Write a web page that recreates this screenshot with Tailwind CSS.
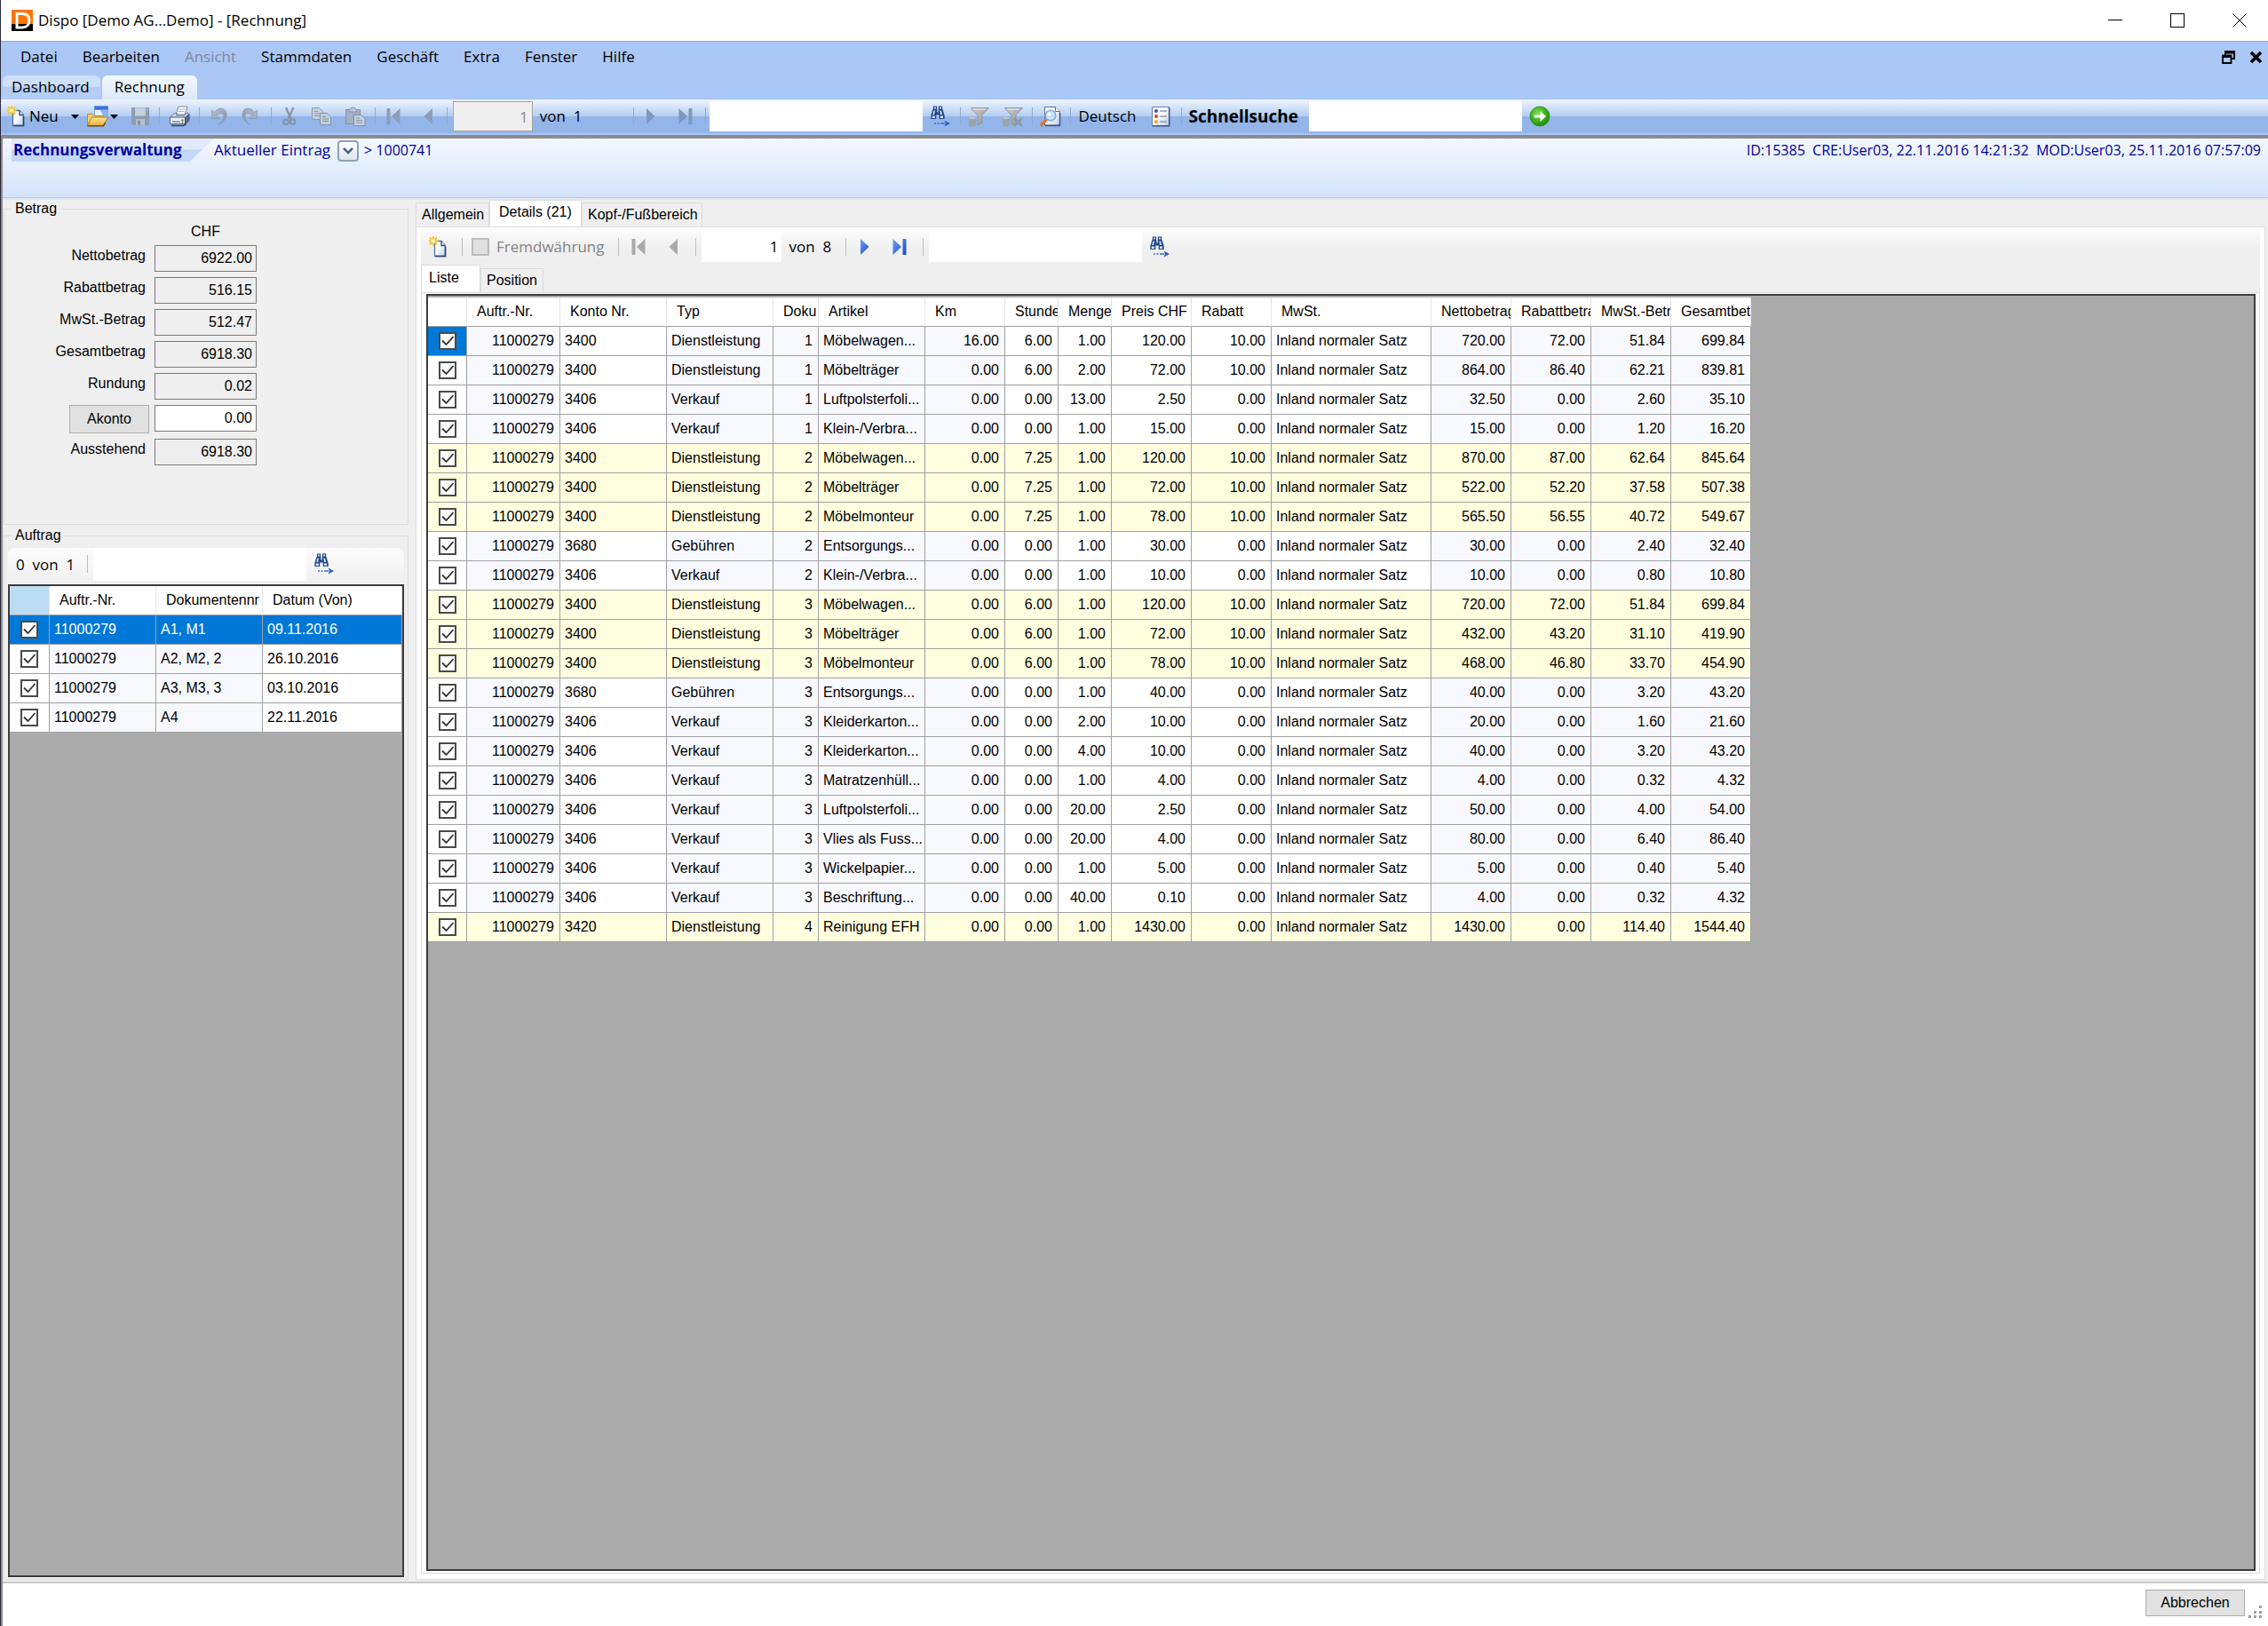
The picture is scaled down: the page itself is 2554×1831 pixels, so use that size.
<!DOCTYPE html>
<html lang="de">
<head>
    <meta charset="UTF-8">
    <meta name="viewport" content="width=device-width, initial-scale=1.0">
    <title>Dispo - Rechnung</title>
    <script src="https://cdn.jsdelivr.net/npm/@tailwindcss/browser@4"></script>
</head>
<body class="flex h-screen flex-col overflow-hidden border-l border-[#2b2b3b] bg-[#efefef] font-['Open_Sans',sans-serif] text-[17px] text-black">

    <!-- Icon set -->
    <svg class="absolute h-0 w-0" aria-hidden="true">
        <defs>
            <linearGradient id="gGray" x1="0" y1="0" x2="1" y2="1"><stop offset="0" stop-color="#b3bfcf"/><stop offset="1" stop-color="#8391a3"/></linearGradient>
            <linearGradient id="gSilver" x1="0" y1="0" x2="1" y2="1"><stop offset="0" stop-color="#cfcfcf"/><stop offset="1" stop-color="#8f8f8f"/></linearGradient>
            <linearGradient id="gBlue" x1="0" y1="0" x2="1" y2="1"><stop offset="0" stop-color="#6fa0f5"/><stop offset="1" stop-color="#1448c8"/></linearGradient>
            <linearGradient id="gPage" x1="0" y1="0" x2="1" y2="1"><stop offset=".4" stop-color="#ffffff"/><stop offset="1" stop-color="#b9cdec"/></linearGradient>
            <linearGradient id="gFolder" x1="0" y1="0" x2="0" y2="1"><stop offset="0" stop-color="#ffe9a0"/><stop offset="1" stop-color="#eba92c"/></linearGradient>
            <radialGradient id="gGreen" cx=".4" cy=".35" r=".7"><stop offset="0" stop-color="#7fe04a"/><stop offset="1" stop-color="#118a06"/></radialGradient>
        </defs>
        <symbol id="new" viewBox="0 0 22 24">
            <path d="M7.500 5.500h7.500l4.500 5v12h-12z" fill="url(#gPage)" stroke="#56729c" stroke-width="1.300"/>
            <path d="M15 5.500v5h4.500" fill="#dfe8f6" stroke="#2e4a78" stroke-width="1.300"/>
            <path d="M19.500 12v10.500h-11" fill="none" stroke="#2f4468" stroke-width="1.600"/>
            <path d="M6 0v11M.5 5.500h11M2 1.500l8 8M10 1.500l-8 8" stroke="#f3c533" stroke-width="2"/>
            <circle cx="6" cy="5.500" r="2.200" fill="#fff3a8"/>
        </symbol>
        <symbol id="open" viewBox="0 0 26 24">
            <rect x="9.500" y=".7" width="15" height="14" fill="#e4efff" stroke="#7fa3e6"/>
            <rect x="9.500" y=".7" width="15" height="4" fill="#3f6fd8"/>
            <path d="M16 5h8.500v9h-4z" fill="#8db4f3"/>
            <path d="M1.500 22V9.500h6l2 2h10v4" fill="#f5d06c" stroke="#c08a1c"/>
            <path d="M1.500 22.500l5-9.500h18l-5 9.500z" fill="url(#gFolder)" stroke="#b07a16"/>
            <path d="M1.500 22.800h18l2-3.500" fill="none" stroke="#5a4212" stroke-width="1.300"/>
        </symbol>
        <symbol id="save" viewBox="0 0 22 22">
            <path d="M1 1h20v20H3l-2-2z" fill="#8d9bb0"/>
            <path d="M5 1.500h12v9H5z" fill="#c5d0df"/>
            <path d="M6 14h10v7H6z" fill="#b4c1d2"/><path d="M8 15.500h3V21H8z" fill="#8391a6"/>
            <path d="M18 2.500h1.500v2H18z" fill="#c5d0df"/>
        </symbol>
        <symbol id="print" viewBox="0 0 24 24">
            <path d="M8 10l3-9h10l-3 9z" fill="#fdfdff" stroke="#7f8da5"/>
            <path d="M11.500 4h7M10.500 6.500h7" stroke="#aab6c8"/>
            <path d="M1.500 13l5-4.500h3l-1 2.500h9.500l1.500-2.500h2.500l1 1-4 4.500z" fill="#cfd9e8" stroke="#6d7b94"/>
            <path d="M1.500 13h17v7.500h-17z" fill="#e9eef6" stroke="#55637d"/>
            <path d="M18.500 13.500l4.500-4v7l-4.500 4z" fill="#5b6b88" stroke="#3c4a66"/>
            <path d="M3 22.500h14l3-2" fill="none" stroke="#33415c" stroke-width="1.500"/>
            <path d="M4 18h9" stroke="#76849c" stroke-width="1.500"/><circle cx="15.500" cy="16.500" r="1.200" fill="#27a544"/><circle cx="15.500" cy="19" r=".9" fill="#e04b2c"/>
        </symbol>
        <symbol id="undo" viewBox="0 0 20 22">
            <path d="M1.500 4v9.500h9l-3.300-3.300c3-4 9-2.700 7.500 2.800-.7 2.500-2.700 5-5.700 7.500 6-2.500 10-8 9-13-1-6.500-9-7.500-13.300-1.200z" fill="url(#gGray)" stroke="#8593a8" stroke-width=".6"/>
        </symbol>
        <symbol id="cut" viewBox="0 0 16 22">
            <path d="M4 1l5.500 13M12.500 1L6.500 14" stroke="#8a97aa" stroke-width="2.400" fill="none"/>
            <circle cx="4" cy="17.500" r="2.800" fill="none" stroke="#8492a8" stroke-width="2"/><circle cx="11.500" cy="17" r="2.800" fill="none" stroke="#8492a8" stroke-width="2"/>
        </symbol>
        <symbol id="copy" viewBox="0 0 24 22">
            <path d="M1.500 1.500h8l4 4v9h-12z" fill="#c4cfde" stroke="#8d9bb0"/><path d="M4 5.500h4M4 8h7M4 10.500h7" stroke="#8d9bb0"/>
            <path d="M10.500 7.500h8l4 4v9h-12z" fill="#c4cfde" stroke="#8391a6"/><path d="M13 11.500h4M13 14h7M13 16.500h7" stroke="#8391a6"/>
        </symbol>
        <symbol id="paste" viewBox="0 0 24 22">
            <path d="M1.500 3.500h16v16h-16z" fill="#a4b1c4" stroke="#8492a8"/><path d="M5.500 4.500c0-2 2-3.500 4-3.500s4 1.500 4 3.500v1.500h-8z" fill="#bdc8d8" stroke="#8492a8"/>
            <path d="M10.500 9.500h8l4.500 4v8H10.500z" fill="#c8d2e0" stroke="#7f8da3"/><path d="M13 13h4M13 15.500h7M13 18h7" stroke="#8593a8"/>
        </symbol>
        <symbol id="first" viewBox="0 0 16 20"><path d="M.5 1h4v18h-4zM15.500 1v18L6 10z"/></symbol>
        <symbol id="prev" viewBox="0 0 10 20"><path d="M10 1v18L.5 10z"/></symbol>
        <symbol id="next" viewBox="0 0 10 20"><path d="M0 1v18l9.500-9z"/></symbol>
        <symbol id="last" viewBox="0 0 16 20"><path d="M.5 1v18l9.500-9zM11.500 1h4v18h-4z"/></symbol>
        <symbol id="find" viewBox="0 0 24 24">
            <path d="M4.500 1h3v3h-3zM10.500 1h3v3h-3z" fill="#e6eefb" stroke="#1d3f80" stroke-width="1.200"/>
            <path d="M3.500 4h4.800v3.500h1.400V4h4.800l2.200 7v4h-6v-4.500H7.300V15h-6v-4z" fill="#24488c"/>
            <path d="M4.500 5.500h1.500L5 10H3.300zM11.500 5.500H13l1 4.500h-2zM2.800 11.500h3V14h-3zM12 11.500h3V14h-3z" fill="#dfe9fa"/>
            <path d="M5 20h2M8.500 20h2M12 20h5" stroke="#3d6bd0" stroke-width="1.600"/><path d="M16.500 16.500l6.500 3.500-6.500 3.500 1.500-3.500z" fill="#2d5cc8"/>
        </symbol>
        <symbol id="filter" viewBox="0 0 24 24">
            <path d="M3.500 2.500h20l-7.500 8v9l-5 2.500V11z" fill="url(#gSilver)" stroke="#8e98a6"/><path d="M6 4h14" stroke="#dde2e8" stroke-width="1.500"/>
            <path d="M1 13.500c0-2 8-2 8 0V22c0 2-8 2-8 0z" fill="#9ba3ae"/><ellipse cx="5" cy="13.700" rx="3.600" ry="1.200" fill="#c5cad2"/>
        </symbol>
        <symbol id="preview" viewBox="0 0 24 24">
            <path d="M5.500 1.500h12l5 5v15.500h-17z" fill="url(#gPage)" stroke="#5c7098"/><path d="M17.500 1.500v5h5" fill="#fff" stroke="#5c7098"/>
            <path d="M6 22.500h16.500V8" fill="none" stroke="#45567a" stroke-width="1.500"/>
            <path d="M7.500 15.500L2 21.500" stroke="#d97b2c" stroke-width="3.600" stroke-linecap="round"/>
            <circle cx="12" cy="11" r="5.800" fill="#bfe6fb" stroke="#8fa9cf" stroke-width="1.600"/><circle cx="10.500" cy="9.500" r="2" fill="#f4fcff"/>
        </symbol>
        <symbol id="list" viewBox="0 0 22 24">
            <path d="M1.500 1.500h19v21h-19z" fill="url(#gPage)" stroke="#6d7fa8"/><path d="M1.500 22.700h19.200V2" fill="none" stroke="#44557c" stroke-width="1.600"/>
            <path d="M10 6h8M10 12h8M10 18h8" stroke="#8f9bb3" stroke-width="1.500"/>
            <circle cx="6" cy="6" r="2" fill="#3a4fe0"/><circle cx="6" cy="12" r="2" fill="#e2402c"/><circle cx="6" cy="18" r="2" fill="#e6a91c"/>
        </symbol>
        <symbol id="go" viewBox="0 0 24 24">
            <circle cx="12" cy="12" r="11" fill="url(#gGreen)" stroke="#2a9a1c"/>
            <path d="M5.500 10.500h7V6l6.500 6-6.500 6v-4.500h-7z" fill="#fff"/>
        </symbol>
        <symbol id="tick" viewBox="0 0 20 20"><path d="M4 9.500l4.500 4.500L16.500 5" fill="none" stroke="#333" stroke-width="1.800"/></symbol>
    </svg>

    <!-- Title bar -->
    <header class="flex h-[46px] shrink-0 items-center bg-white pl-3 pr-6">
        <svg class="h-6 w-6" viewBox="0 0 24 24">
            <path d="M0 0h24v16H0z" fill="#ff7300"/><path d="M0 16h24v8H0z" fill="#000"/>
            <path d="M6 4.500h6c5 0 8 2.700 8 7.500s-3 8-8 8H6z" fill="none" stroke="#fff" stroke-width="3"/>
        </svg>
        <h1 class="ml-[6px] flex-1">Dispo [Demo AG...Demo] - [Rechnung]</h1>
        <div class="flex items-center gap-[54px]">
            <button type="button" aria-label="Minimieren"><svg class="h-4 w-4" viewBox="0 0 16 16" shape-rendering="crispEdges"><path d="M0 7.500h16" stroke="#000"/></svg></button>
            <button type="button" aria-label="Maximieren"><svg class="h-4 w-4" viewBox="0 0 16 16" shape-rendering="crispEdges"><path d="M.5.5h15v15H.5z" fill="none" stroke="#000"/></svg></button>
            <button type="button" aria-label="Schliessen"><svg class="h-4 w-4" viewBox="0 0 16 16"><path d="M.5.5l15 15M15.500.5l-15 15" stroke="#000"/></svg></button>
        </div>
    </header>

    <!-- Menu -->
    <nav class="flex h-[39px] shrink-0 items-center border-t border-[#8fa6d3] bg-[#abc7f6] pb-1 pl-2 pr-[6px]">
        <a href="#" class="px-[14px]">Datei</a>
        <a href="#" class="px-[14px]">Bearbeiten</a>
        <a href="#" class="px-[14px] text-[#7f8796]">Ansicht</a>
        <a href="#" class="px-[14px]">Stammdaten</a>
        <a href="#" class="px-[14px]">Geschäft</a>
        <a href="#" class="px-[14px]">Extra</a>
        <a href="#" class="px-[14px]">Fenster</a>
        <a href="#" class="px-[14px]">Hilfe</a>
        <button type="button" aria-label="Wiederherstellen" class="ml-auto"><svg class="h-[15px] w-[15px]" viewBox="0 0 15 15"><path d="M4 5V1h10v8h-3M4 2.500h10" fill="none" stroke="#000" stroke-width="1.800"/><path d="M1 5.500h9.500V14H1zM1 7h9.500" fill="none" stroke="#000" stroke-width="1.800"/></svg></button>
        <button type="button" aria-label="Fenster schliessen" class="ml-4"><svg class="h-[15px] w-[15px]" viewBox="0 0 15 15"><path d="M2 2l11 11M13 2L2 13" stroke="#000" stroke-width="3.600"/></svg></button>
    </nav>

    <!-- Document tabs -->
    <nav class="flex h-[27px] shrink-0 gap-[2px] bg-[#abc7f6] pl-[2px]">
        <a href="#" class="flex items-center rounded-t-md bg-linear-to-b from-[#cddff9] from-45% to-[#b4cdf6] to-50% pb-[2px] pl-[10px] pr-3">Dashboard</a>
        <a href="#" class="flex items-center rounded-t-md bg-linear-to-b from-[#f3f8ff] to-[#dbe8fb] px-[14px] pb-[2px]">Rechnung</a>
    </nav>

    <!-- Main toolbar -->
    <div class="flex h-10 shrink-0 items-center border-b-2 border-[#a9c6f2] bg-linear-to-b from-[#e9f1fc] from-5% via-[#b3cdf0] via-50% to-[#93b5ea] to-50% pl-[6px]">
        <button type="button" class="flex items-center"><svg class="mr-1 h-6 w-[22px]"><use href="#new"/></svg>Neu</button>
        <svg class="ml-[14px] h-[5px] w-[9px]" viewBox="0 0 9 5"><path d="M0 0h9L4.500 5z"/></svg>
        <button type="button" aria-label="Öffnen" class="ml-2 flex items-center"><svg class="h-6 w-[26px]"><use href="#open"/></svg><svg class="ml-[1px] h-[5px] w-[9px]" viewBox="0 0 9 5"><path d="M0 0h9L4.500 5z"/></svg></button>
        <button type="button" aria-label="Speichern" class="ml-[14px]"><svg class="block h-[22px] w-[22px]"><use href="#save"/></svg></button>
        <span class="ml-[10px] h-5 w-px bg-[#8faad2]"></span>
        <button type="button" aria-label="Drucken" class="ml-[10px]"><svg class="block h-6 w-6"><use href="#print"/></svg></button>
        <span class="ml-[10px] h-5 w-px bg-[#8faad2]"></span>
        <button type="button" aria-label="Rückgängig" class="ml-3"><svg class="block h-[22px] w-5"><use href="#undo"/></svg></button>
        <button type="button" aria-label="Wiederholen" class="ml-[14px]"><svg class="block h-[22px] w-5 -scale-x-100"><use href="#undo"/></svg></button>
        <span class="ml-[14px] h-5 w-px bg-[#8faad2]"></span>
        <button type="button" aria-label="Ausschneiden" class="ml-3"><svg class="block h-[22px] w-4"><use href="#cut"/></svg></button>
        <button type="button" aria-label="Kopieren" class="ml-4"><svg class="block h-[22px] w-6"><use href="#copy"/></svg></button>
        <button type="button" aria-label="Einfügen" class="ml-[14px]"><svg class="block h-[22px] w-6"><use href="#paste"/></svg></button>
        <span class="ml-[10px] h-5 w-px bg-[#8faad2]"></span>
        <button type="button" aria-label="Erster" class="ml-3"><svg class="block h-5 w-4 fill-[#8c9db8]"><use href="#first"/></svg></button>
        <button type="button" aria-label="Vorheriger" class="ml-[26px]"><svg class="block h-5 w-[10px] fill-[#8c9db8]"><use href="#prev"/></svg></button>
        <span class="ml-4 h-5 w-px bg-[#8faad2]"></span>
        <input type="text" value="1" disabled aria-label="Datensatz" class="ml-[6px] h-[34px] w-[90px] border border-[#a6a6a6] bg-[#efefef] px-1 text-right text-[#8b8b8b]">
        <span class="ml-2 whitespace-pre">von  1</span>
        <span class="ml-[58px] h-5 w-px bg-[#8faad2]"></span>
        <button type="button" aria-label="Nächster" class="ml-[14px]"><svg class="block h-5 w-[10px] fill-[#7f97bd]"><use href="#next"/></svg></button>
        <button type="button" aria-label="Letzter" class="ml-[26px]"><svg class="block h-5 w-4 fill-[#7f97bd]"><use href="#last"/></svg></button>
        <span class="ml-[14px] h-5 w-px bg-[#8faad2]"></span>
        <input type="text" aria-label="Suchen" class="ml-1 h-[34px] w-[240px] bg-white px-1">
        <button type="button" aria-label="Suche starten" class="ml-2"><svg class="block h-6 w-6"><use href="#find"/></svg></button>
        <span class="ml-[10px] h-5 w-px bg-[#8faad2]"></span>
        <button type="button" aria-label="Filter" class="ml-2"><svg class="block h-6 w-6"><use href="#filter"/></svg></button>
        <button type="button" aria-label="Filter entfernen" class="ml-[14px] grid"><svg class="col-start-1 row-start-1 h-6 w-6"><use href="#filter"/></svg><svg class="col-start-1 row-start-1 h-6 w-6" viewBox="0 0 24 24"><path d="M14 14l9 9M23 14l-9 9" stroke="#8d97a6" stroke-width="2.500"/></svg></button>
        <span class="ml-[10px] h-5 w-px bg-[#8faad2]"></span>
        <button type="button" aria-label="Vorschau" class="ml-2"><svg class="block h-6 w-6"><use href="#preview"/></svg></button>
        <span class="ml-[10px] h-5 w-px bg-[#8faad2]"></span>
        <button type="button" class="ml-2">Deutsch</button>
        <button type="button" aria-label="Optionen" class="ml-4"><svg class="block h-6 w-[22px]"><use href="#list"/></svg></button>
        <span class="ml-3 h-5 w-px bg-[#8faad2]"></span>
        <label for="quick" class="ml-2 text-[19px] font-bold">Schnellsuche</label>
        <input type="text" id="quick" class="ml-3 h-[34px] w-[240px] bg-white px-1">
        <button type="button" aria-label="Los" class="ml-2"><svg class="block h-6 w-6"><use href="#go"/></svg></button>
    </div>

    <div class="flex min-h-0 flex-1 flex-col border-l-2 border-t-4 border-[#8a8a8a]">
        <!-- Breadcrumb -->
        <div class="flex h-[67px] shrink-0 items-start border-b border-[#c4c8d0] bg-linear-to-b from-[#f4f8ff] to-[#d5e3fa] pl-[10px] pr-2 leading-[26px] text-[#00009c]">
            <h2 class="w-[228px] bg-linear-to-b from-[#dfeafc] from-45% to-[#c3d8f9] to-50% pl-[2px] font-bold [clip-path:polygon(0_0,100%_0,88%_100%,0_100%)]">Rechnungsverwaltung</h2>
            <a href="#">Aktueller Eintrag</a>
            <button type="button" aria-label="Eintrag wählen" class="ml-2 mt-[2px] flex h-6 w-6 items-center justify-center rounded-sm border-2 border-[#8ba2bd] bg-linear-to-b from-white to-[#dce6f2]"><svg class="h-2 w-3" viewBox="0 0 12 8"><path d="M1 1l5 5 5-5" fill="none" stroke="#4a6390" stroke-width="2.500"/></svg></button>
            <span class="ml-[6px] text-[16px]">&gt; 1000741</span>
            <span class="ml-auto whitespace-pre text-[16px]">ID:15385  CRE:User03, 22.11.2016 14:21:32  MOD:User03, 25.11.2016 07:57:09</span>
        </div>

        <main class="flex min-h-0 flex-1 border-t-2 border-[#dfe7f5] font-['Liberation_Sans',sans-serif] text-[16px]">
            <aside class="flex w-[457px] shrink-0 flex-col gap-[3px] pb-[2px] pl-px pt-px">
                <fieldset class="h-[365px] shrink-0 border border-[#dcdcdc]">
                    <legend class="ml-2 px-1 leading-[18px]">Betrag</legend>
                    <div class="grid grid-cols-[159px_115px] gap-x-[10px] gap-y-[6px] pt-2">
                        <span class="col-start-2 text-center leading-[18px]">CHF</span>
                        <label for="netto" class="text-right leading-6">Nettobetrag</label>
                        <input id="netto" readonly value="6922.00" class="h-[30px] border border-[#7a7a7a] px-1 text-right">
                        <label for="rabatt" class="text-right leading-6">Rabattbetrag</label>
                        <input id="rabatt" readonly value="516.15" class="h-[30px] border border-[#7a7a7a] px-1 text-right">
                        <label for="mwst" class="text-right leading-6">MwSt.-Betrag</label>
                        <input id="mwst" readonly value="512.47" class="h-[30px] border border-[#7a7a7a] px-1 text-right">
                        <label for="gesamt" class="text-right leading-6">Gesamtbetrag</label>
                        <input id="gesamt" readonly value="6918.30" class="h-[30px] border border-[#7a7a7a] px-1 text-right">
                        <label for="rundung" class="text-right leading-6">Rundung</label>
                        <input id="rundung" readonly value="0.02" class="h-[30px] border border-[#7a7a7a] px-1 text-right">
                        <button type="button" class="-mr-1 h-8 w-[90px] justify-self-end border border-[#adadad] bg-[#e1e1e1]">Akonto</button>
                        <input aria-label="Akonto" value="0.00" class="h-[30px] border border-[#7a7a7a] bg-white px-1 text-right">
                        <label for="offen" class="text-right leading-6">Ausstehend</label>
                        <input id="offen" readonly value="6918.30" class="h-[30px] border border-[#7a7a7a] px-1 text-right">
                    </div>
                </fieldset>
                <fieldset class="min-h-0 flex-1 border border-[#dcdcdc]">
                    <legend class="ml-2 px-1 leading-[18px]">Auftrag</legend>
                    <div class="flex h-full flex-col px-1 pb-[2px] pt-[5px]">
                        <div class="flex h-[41px] shrink-0 items-start rounded-lg bg-linear-to-b from-[#fcfcfc] to-[#efefef] pl-[9px] font-['Open_Sans',sans-serif] text-[17px]">
                            <span class="whitespace-pre leading-[37px]">0  von  1</span>
                            <span class="ml-[14px] mt-2 h-5 w-px bg-[#bdbdbd]"></span>
                            <input type="text" aria-label="Auftrag suchen" class="ml-[6px] h-[37px] w-[240px] bg-white px-1">
                            <button type="button" aria-label="Suche starten" class="ml-2 mt-[6px]"><svg class="block h-6 w-6"><use href="#find"/></svg></button>
                        </div>
                        <div class="min-h-0 flex-1 border-2 border-[#3c3c3c] bg-[#ababab]">
                            <table class="w-full table-fixed border-separate border-spacing-0 text-left">
                                <colgroup><col class="w-[45px]"><col class="w-[120px]"><col class="w-[120px]"><col></colgroup>
                                <thead>
                                    <tr class="h-[33px] bg-white">
                                        <th aria-label="Auswahl" class="border-b border-r border-b-[#a0a0a0] border-r-[#e5e5e5] bg-[#bcdcf4]"></th>
                                        <th class="border-b border-r border-b-[#a0a0a0] border-r-[#e5e5e5] pl-[11px] font-normal whitespace-nowrap">Auftr.-Nr.</th>
                                        <th class="border-b border-r border-b-[#a0a0a0] border-r-[#e5e5e5] pl-[11px] font-normal whitespace-nowrap">Dokumentennr</th>
                                        <th class="border-b border-r border-b-[#a0a0a0] border-r-[#e5e5e5] pl-[11px] font-normal whitespace-nowrap">Datum (Von)</th>
                                    </tr>
                                </thead>
                                <tbody id="orders"></tbody>
                            </table>
                        </div>
                    </div>
                </fieldset>
            </aside>

            <section class="flex min-w-0 flex-1 flex-col pb-[2px] pl-2 pr-[3px]">
                <div class="flex items-end">
                    <a href="#" class="flex h-[27px] w-[83px] items-center border border-b-0 border-[#dcdcdc] px-[6px]">Allgemein</a>
                    <a href="#" class="-mb-px flex h-[31px] w-[104px] items-center border border-b-0 border-[#dcdcdc] bg-white px-[10px] pb-1">Details (21)</a>
                    <a href="#" class="flex h-[27px] w-[136px] items-center border border-b-0 border-[#dcdcdc] px-[6px]">Kopf-/Fußbereich</a>
                </div>
                <div class="flex min-h-0 flex-1 flex-col border border-[#dcdcdc] bg-white pb-[6px] pl-[5px] pr-[5px] pt-px">
                    <div class="flex h-[41px] shrink-0 items-center bg-linear-to-b from-[#fcfcfc] to-[#efefef] to-60% pl-2 font-['Open_Sans',sans-serif] text-[17px]">
                        <button type="button" aria-label="Neue Position"><svg class="block h-6 w-[22px]"><use href="#new"/></svg></button>
                        <span class="ml-4 h-5 w-px bg-[#bdbdbd]"></span>
                        <input type="checkbox" id="fw" disabled class="ml-[10px] h-5 w-5 appearance-none border-2 border-[#bcbcbc] bg-[#e0e0e0]">
                        <label for="fw" class="ml-2 text-[#838383]">Fremdwährung</label>
                        <span class="ml-4 h-5 w-px bg-[#bdbdbd]"></span>
                        <button type="button" aria-label="Erste" class="ml-[14px]"><svg class="block h-5 w-4 fill-[#a9a9a9]"><use href="#first"/></svg></button>
                        <button type="button" aria-label="Vorherige" class="ml-[26px]"><svg class="block h-5 w-[10px] fill-[#a9a9a9]"><use href="#prev"/></svg></button>
                        <span class="ml-5 h-5 w-px bg-[#bdbdbd]"></span>
                        <input type="text" value="1" aria-label="Seite" class="ml-[6px] h-[34px] w-[90px] bg-white px-1 text-right">
                        <span class="ml-2 whitespace-pre">von  8</span>
                        <span class="ml-4 h-5 w-px bg-[#bdbdbd]"></span>
                        <button type="button" aria-label="Nächste" class="ml-4"><svg class="block h-5 w-[10px] fill-[url(#gBlue)]"><use href="#next"/></svg></button>
                        <button type="button" aria-label="Letzte" class="ml-[26px]"><svg class="block h-5 w-4 fill-[url(#gBlue)]"><use href="#last"/></svg></button>
                        <span class="ml-[18px] h-5 w-px bg-[#bdbdbd]"></span>
                        <input type="text" aria-label="Position suchen" class="ml-[6px] h-[34px] w-[240px] bg-white px-1">
                        <button type="button" aria-label="Suche starten" class="ml-2"><svg class="block h-6 w-6"><use href="#find"/></svg></button>
                    </div>
                    <div class="flex h-[31px] shrink-0 items-end bg-[#efefef]">
                        <a href="#" class="-mb-px flex h-8 w-[67px] items-center border border-b-0 border-[#dcdcdc] bg-white px-2 pb-1">Liste</a>
                        <a href="#" class="flex h-[27px] items-center border border-b-0 border-[#dcdcdc] px-[6px]">Position</a>
                    </div>
                    <div class="flex min-h-0 flex-1 flex-col border border-[#dcdcdc] pb-[2px] pl-[5px] pr-1 pt-px">
                        <div class="min-h-0 flex-1 border-2 border-[#3c3c3c] bg-[#ababab] pt-[2px]">
                            <table class="w-[1490px] table-fixed border-separate border-spacing-0 text-left">
                                <colgroup>
                                    <col class="w-[44px]"><col class="w-[105px]"><col class="w-[120px]"><col class="w-[120px]"><col class="w-[51px]"><col class="w-[120px]"><col class="w-[90px]"><col class="w-[60px]"><col class="w-[60px]"><col class="w-[90px]"><col class="w-[90px]"><col class="w-[180px]"><col class="w-[90px]"><col class="w-[90px]"><col class="w-[90px]"><col class="w-[90px]">
                                </colgroup>
                                <thead><tr id="heads" class="h-[33px] bg-white"></tr></thead>
                                <tbody id="items"></tbody>
                            </table>
                        </div>
                    </div>
                </div>
            </section>
        </main>

        <!-- Footer -->
        <footer class="flex h-[50px] shrink-0 items-start border-t-2 border-[#c8c8c8] bg-white pr-[6px] pt-[7px] font-['Liberation_Sans',sans-serif] text-[16px]">
            <button type="button" class="ml-auto h-[30px] w-[112px] border border-[#adadad] bg-[#e1e1e1]">Abbrechen</button>
            <svg class="ml-1 mt-4 h-4 w-4" viewBox="0 0 16 16" fill="#a0a0a0"><path d="M12 2h3v3h-3zM6 8h3v3H6zM12 8h3v3h-3zM0 13h3v3H0zM6 13h3v3H6zM12 13h3v3h-3z"/></svg>
        </footer>
    </div>

    <script>
        const heads = ['', 'Auftr.-Nr.', 'Konto Nr.', 'Typ', 'Doku', 'Artikel', 'Km', 'Stunde', 'Menge', 'Preis CHF', 'Rabatt', 'MwSt.', 'Nettobetrag', 'Rabattbetrag', 'MwSt.-Betr', 'Gesamtbet'];

        // konto|typ|doku|artikel|km|stunden|menge|preis|rabatt|netto|rabattbetrag|mwst|gesamt
        const rows = `3400|Dienstleistung|1|Möbelwagen...|16.00|6.00|1.00|120.00|10.00|720.00|72.00|51.84|699.84
3400|Dienstleistung|1|Möbelträger|0.00|6.00|2.00|72.00|10.00|864.00|86.40|62.21|839.81
3406|Verkauf|1|Luftpolsterfoli...|0.00|0.00|13.00|2.50|0.00|32.50|0.00|2.60|35.10
3406|Verkauf|1|Klein-/Verbra...|0.00|0.00|1.00|15.00|0.00|15.00|0.00|1.20|16.20
3400|Dienstleistung|2|Möbelwagen...|0.00|7.25|1.00|120.00|10.00|870.00|87.00|62.64|845.64
3400|Dienstleistung|2|Möbelträger|0.00|7.25|1.00|72.00|10.00|522.00|52.20|37.58|507.38
3400|Dienstleistung|2|Möbelmonteur|0.00|7.25|1.00|78.00|10.00|565.50|56.55|40.72|549.67
3680|Gebühren|2|Entsorgungs...|0.00|0.00|1.00|30.00|0.00|30.00|0.00|2.40|32.40
3406|Verkauf|2|Klein-/Verbra...|0.00|0.00|1.00|10.00|0.00|10.00|0.00|0.80|10.80
3400|Dienstleistung|3|Möbelwagen...|0.00|6.00|1.00|120.00|10.00|720.00|72.00|51.84|699.84
3400|Dienstleistung|3|Möbelträger|0.00|6.00|1.00|72.00|10.00|432.00|43.20|31.10|419.90
3400|Dienstleistung|3|Möbelmonteur|0.00|6.00|1.00|78.00|10.00|468.00|46.80|33.70|454.90
3680|Gebühren|3|Entsorgungs...|0.00|0.00|1.00|40.00|0.00|40.00|0.00|3.20|43.20
3406|Verkauf|3|Kleiderkarton...|0.00|0.00|2.00|10.00|0.00|20.00|0.00|1.60|21.60
3406|Verkauf|3|Kleiderkarton...|0.00|0.00|4.00|10.00|0.00|40.00|0.00|3.20|43.20
3406|Verkauf|3|Matratzenhüll...|0.00|0.00|1.00|4.00|0.00|4.00|0.00|0.32|4.32
3406|Verkauf|3|Luftpolsterfoli...|0.00|0.00|20.00|2.50|0.00|50.00|0.00|4.00|54.00
3406|Verkauf|3|Vlies als Fuss...|0.00|0.00|20.00|4.00|0.00|80.00|0.00|6.40|86.40
3406|Verkauf|3|Wickelpapier...|0.00|0.00|1.00|5.00|0.00|5.00|0.00|0.40|5.40
3406|Verkauf|3|Beschriftung...|0.00|0.00|40.00|0.10|0.00|4.00|0.00|0.32|4.32
3420|Dienstleistung|4|Reinigung EFH|0.00|0.00|1.00|1430.00|0.00|1430.00|0.00|114.40|1544.40`.split('\n');

        // Rows shown in yellow, by index
        const marked = [4, 5, 6, 9, 10, 11, 20];
        const leftCols = [1, 2, 4, 10];
        const readonlyCols = [0, 2, 3, 4, 5, 11, 12, 13, 14];

        const orders = [['11000279', 'A1, M1', '09.11.2016'], ['11000279', 'A2, M2, 2', '26.10.2016'], ['11000279', 'A3, M3, 3', '03.10.2016'], ['11000279', 'A4', '22.11.2016']];

        function tick(bg) {
            return `<td class="border-b border-r border-[#a0a0a0] ${bg}"><div class="grid justify-center"><input type="checkbox" checked aria-label="Auswahl" class="col-start-1 row-start-1 h-5 w-5 appearance-none border-2 border-[#4a4a4a] bg-white"><svg class="pointer-events-none col-start-1 row-start-1 h-5 w-5"><use href="#tick"/></svg></div></td>`;
        }

        document.getElementById('heads').innerHTML = heads.map(h =>
            `<th class="border-b border-r border-b-[#a0a0a0] border-r-[#e5e5e5] pl-[11px] font-normal whitespace-nowrap"><div class="overflow-hidden">${h}</div></th>`).join('');

        document.getElementById('items').innerHTML = rows.map((line, i) => {
            const v = line.split('|');
            const cells = ['11000279', ...v.slice(0, 9), 'Inland normaler Satz', ...v.slice(9)];
            const yellow = marked.includes(i);
            return '<tr class="h-[33px]">' + tick(i === 0 ? 'bg-[#0078d7]' : yellow ? 'bg-[#ffffe0]' : 'bg-white') + cells.map((c, n) => {
                const bg = yellow ? 'bg-[#ffffe0]' : readonlyCols.includes(n) ? 'bg-[#f8f8ff]' : 'bg-white';
                const align = leftCols.includes(n) ? 'pl-[5px] text-left' : 'pr-[6px] text-right';
                return `<td class="whitespace-nowrap border-b border-r border-[#a0a0a0] ${bg} ${align}">${c}</td>`;
            }).join('') + '</tr>';
        }).join('');

        document.getElementById('orders').innerHTML = orders.map((o, i) => {
            const sel = i === 0;
            return `<tr class="h-[33px] ${sel ? 'text-white' : 'text-black'}">` + tick(sel ? 'bg-[#0078d7]' : 'bg-white') + o.map((c, n) =>
                `<td class="border-b border-r border-[#a0a0a0] pl-[5px] ${sel ? 'bg-[#0078d7]' : n < 2 ? 'bg-[#f8f8ff]' : 'bg-white'}">${c}</td>`).join('') + '</tr>';
        }).join('');
    </script>
</body>
</html>
